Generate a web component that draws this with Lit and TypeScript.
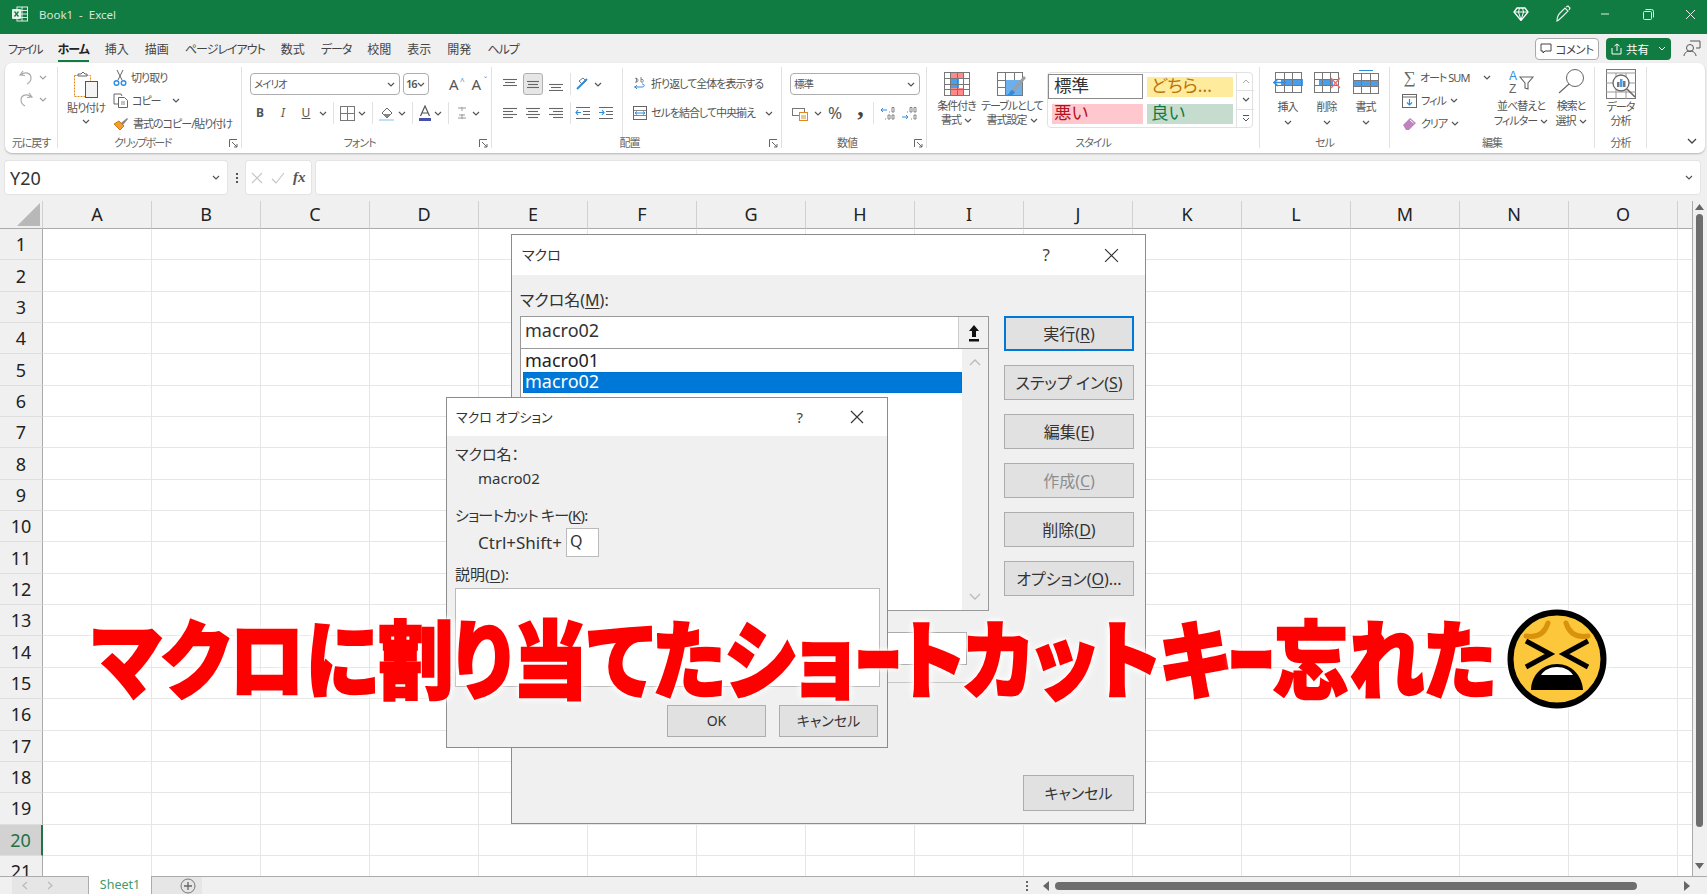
import { LitElement, html, css, svg } from "lit";
import { customElement } from "lit/decorators.js";

const FONT = css`"Noto Sans", "Noto Sans CJK JP", sans-serif`;

const chev = html`<svg class="chev" width="8" height="5" viewBox="0 0 8 5"><path d="M1 1l3 3 3-3" fill="none" stroke="#555" stroke-width="1.2"/></svg>`;
const launcher = html`<svg class="launch" width="9" height="9" viewBox="0 0 9 9"><path d="M.5 8V.5H8M3 3l5 5M8 5v3H5" fill="none" stroke="#666"/></svg>`;

const lines = (ys: number[][], col = "#666") => html`<svg class="ic" width="16" height="14" viewBox="0 0 16 14">${ys.map(
  ([y, a, b]) => svg`<path d="M${a} ${y}.5H${b}" stroke="${col}" stroke-width="1.1"/>`)}</svg>`;

const gridLines = (x: number, y: number, w: number, h: number, c: number, r: number, col = "#777") => svg`
  <rect x="${x + .5}" y="${y + .5}" width="${w}" height="${h}" fill="none" stroke="${col}"/>
  ${Array.from({ length: c - 1 }, (_, i) => svg`<path d="M${x + Math.round((w * (i + 1)) / c) + .5} ${y}v${h}" stroke="${col}"/>`)}
  ${Array.from({ length: r - 1 }, (_, i) => svg`<path d="M${x} ${y + Math.round((h * (i + 1)) / r) + .5}h${w}" stroke="${col}"/>`)}`;

@customElement("xl-ribbon")
class XlRibbon extends LitElement {
  static styles = css`
    :host { display: flex; height: 90px; margin: 0 2px 0 5px; padding-top: 4px; box-sizing: border-box; background: #fff; border-radius: 7px; box-shadow: 0 1px 2px rgba(0,0,0,.25); font-family: ${FONT}; font-size: 11px; letter-spacing: -1px; color: #555; font-feature-settings: "palt"; position: relative; line-height: 14px; white-space: nowrap; }
    .group { display: flex; flex-direction: column; height: 81px; border-right: 1px solid #e1e1e1; box-sizing: border-box; flex: none; }
    .body { height: 71px; display: flex; box-sizing: border-box; }
    .lbl { height: 10px; line-height: 10px; display: flex; justify-content: center; font-size: 11px; color: #666; position: relative; }
    .lbl.l { padding-right: 14px; }
    .lbl.n { letter-spacing: -1.6px; }
    .launch { position: absolute; right: 3px; top: 1px; }
    .ic { display: block; flex: none; }
    .chev { display: block; flex: none; }
    .w-undo { width: 53px; } .w-clip { width: 184px; } .w-font { width: 250px; } .w-align { width: 290px; }
    .w-num { width: 145px; } .w-style { width: 333px; } .w-cells { width: 130px; } .w-edit { width: 205px; } .w-ana { width: 52px; }
    .undo { flex-direction: column; gap: 6px; padding: 2px 0 0 13px; }
    .undo > div { display: flex; align-items: center; gap: 5px; opacity: .55; }
    .clip { padding-left: 6px; gap: 5px; }
    .big { display: flex; flex-direction: column; align-items: center; }
    .big .t { line-height: 14px; text-align: center; display: flex; align-items: center; gap: 3px; justify-content: center; }
    .paste { width: 44px; padding-top: 4px; }
    .paste .t { margin-top: 2px; }
    .paste .chev { margin-top: 4px; }
    .col3 { display: flex; flex-direction: column; }
    .col3 > div { height: 23px; display: flex; align-items: center; gap: 4px; }
    .col3 > div:first-child { margin-top: -1px; }
    .stack { display: flex; flex-direction: column; padding-top: 6px; gap: 7px; }
    .row { display: flex; align-items: center; height: 22px; }
    .combo { height: 22px; box-sizing: border-box; border: 1px solid #adadad; border-radius: 4px; display: flex; align-items: center; justify-content: space-between; padding: 0 4px 0 3px; font-size: 10.5px; }
    .c-font { width: 150px; } .c-size { width: 26px; margin-left: 3px; padding: 0 3px 0 2px; } .c-num { width: 130px; }
    .sz { font-family: "Noto Sans", sans-serif; font-size: 11px; font-weight: 600; }
    .fontg { padding-left: 8px; }
    .aa { font-size: 15px; margin-left: 20px; color: #555; position: relative; letter-spacing: 0; }
    .aa + .aa { margin-left: 13px; }
    .aa i { position: absolute; right: -6px; top: -3px; font-style: normal; font-size: 8px; color: #2e8ce0; }
    .bt { width: 20px; text-align: center; font-family: "Noto Sans", sans-serif; font-size: 12px; letter-spacing: 0; }
    .b { font-weight: 700; } .i { font-style: italic; } .u { text-decoration: underline; }
    .r2 { gap: 3px; }
    .sep { width: 1px; height: 22px; background: #e1e1e1; margin: 0 3px; flex: none; }
    .alg { padding-left: 10px; }
    .alrow { gap: 7px; height: 22px; display: flex; align-items: center; }
    .alrow .sep { margin: 0 -3px 0 -1px; }
    .alrow .chev { margin-left: -4px; }
    .sel { width: 20px; height: 22px; border: 1px solid #b0b0b0; border-radius: 3px; background: #e6e6e6; display: flex; align-items: center; justify-content: center; box-sizing: border-box; margin: 0 -2px; flex: none; }
    .vsep { width: 1px; height: 70px; background: #e1e1e1; margin: 1px 10px 0 8px; flex: none; align-self: flex-start; }
    .wrapc { display: flex; flex-direction: column; gap: 7px; padding-top: 6px; }
    .wrapc > div { height: 22px; display: flex; align-items: center; gap: 4px; }
    .num { padding-left: 8px; }
    .nrow { gap: 6px; padding-left: 2px; }
    .nrow .sep { margin: 0 0 0 3px; }
    .dec { margin-left: -3px; }
    .pct { font-size: 17px; font-family: "Noto Sans", sans-serif; color: #555; letter-spacing: 0; }
    .comma { font-size: 26px; font-weight: 900; margin: -10px 0 0 9px; font-family: "Liberation Serif", serif; color: #444; letter-spacing: 0; }
    .sty { padding-left: 8px; gap: 4px; }
    .sb { width: 43px; padding-top: 5px; }
    .sb2 { width: 60px; padding-top: 5px; }
    .sb .t, .sb2 .t { line-height: 14px; margin-top: 3px; }
    .sb .t + .t, .sb2 .t + .t { margin-top: 0; }
    .gal { width: 206px; height: 56px; margin: 5px 0 0 1px; border: 1px solid #e1e1e1; border-radius: 4px; box-sizing: border-box; display: flex; flex: none; }
    .cells { display: grid; grid-template-columns: 95px 93px; grid-template-rows: 27px 27px; width: 188px; flex: none; align-items: center; letter-spacing: 0; }
    .cell { font-size: 17.5px; line-height: 17px; padding-left: 5px; height: 20px; white-space: nowrap; }
    .c-n { height: 25px; border: 1px solid #8a8a8a; color: #333; line-height: 20px; box-sizing: border-box; }
    .c-m { background: #ffeb9c; color: #b8730c; margin: 0 3px 0 4px; padding-left: 4px; }
    .c-b { background: #ffc7ce; color: #b3131c; margin: 0 0 0 4px; padding-left: 2px; } .c-g { background: #c6dccf; color: #107c41; margin: 0 3px 0 4px; padding-left: 4px; }
    .gs { width: 17px; display: flex; flex-direction: column; border-left: 1px solid #e1e1e1; flex: none; }
    .gs > div { flex: 1; display: flex; align-items: center; justify-content: center; border-bottom: 1px solid #e1e1e1; }
    .gs > div:last-child { border: 0; }
    .cellg { padding: 3px 0 0 8px; }
    .cb { width: 39px; } .cb .t { margin-top: 6px; } .cb .chev { margin-top: 6px; }
    .edit { padding-left: 12px; }
    .e3 { width: 94px; display: flex; flex-direction: column; flex: none; }
    .e3 > div { height: 23px; display: flex; align-items: center; gap: 4px; }
    .e3 > div:first-child { margin-top: -1px; }
    .sum { width: 14px; font-size: 17px; color: #666; text-align: center; font-family: "Liberation Serif", serif; }
    .es { width: 50px; padding-top: 1px; flex: none; }
    .es .t { margin-top: 5px; } .es .t + .t { margin-top: 1px; }
    .ana { align-items: center; flex-direction: column; padding-top: 2px; }
    .ana .t { margin-top: 1px; text-align: center; }
    .collapse { position: absolute; right: 8px; bottom: 9px; }
  `;

  render() {
    return html`
      <div class="group w-undo">
        <div class="body undo">
          <div><svg class="ic" width="16" height="16" viewBox="0 0 16 16"><path d="M5 2L2 6l5 .5M3 6c4-4 10-2 10 3 0 3-2 5-4 6" fill="none" stroke="#666" stroke-width="1.2"/></svg>${chev}</div>
          <div><svg class="ic" width="16" height="16" viewBox="0 0 16 16"><path d="M11 2l3 4-5 .5M13 6C9 2 3 4 3 9c0 3 2 5 4 6" fill="none" stroke="#666" stroke-width="1.2"/></svg>${chev}</div>
        </div>
        <div class="lbl">元に戻す</div>
      </div>

      <div class="group w-clip">
        <div class="body clip">
          <div class="big paste">
            <svg class="ic" width="28" height="28" viewBox="0 0 28 28"><rect x="2.5" y="4.5" width="16" height="21" fill="#fff" stroke="#e08a1e" stroke-dasharray="2 1"/><path d="M6 5h9V3h-2l-2-2-2 2H6z" fill="#fff" stroke="#666"/><rect x="13.5" y="10.5" width="12" height="16" fill="#f4f4f4" stroke="#555"/></svg>
            <div class="t">貼り付け</div>${chev}
          </div>
          <div class="col3">
            <div><svg class="ic" width="14" height="16" viewBox="0 0 14 16"><path d="M4 0l5 10M10 0L5 10" stroke="#666" fill="none"/><circle cx="3.5" cy="13" r="2.3" fill="none" stroke="#2e8ce0" stroke-width="1.4"/><circle cx="10.5" cy="13" r="2.3" fill="none" stroke="#2e8ce0" stroke-width="1.4"/></svg><span>切り取り</span></div>
            <div><svg class="ic" width="15" height="15" viewBox="0 0 15 15"><path d="M5 11H1V1h7l1 2" fill="none" stroke="#666"/><path d="M5.5 4.5h6l3 3v7h-9z" fill="#fff" stroke="#666"/><path d="M8 9h4M8 11h4" stroke="#888"/></svg><span>コピー</span><span>&nbsp;&nbsp;</span>${chev}</div>
            <div><svg class="ic" width="16" height="14" viewBox="0 0 16 14"><path d="M1 7l6 6 4-4-5-5z" fill="#f0a030" stroke="#d07a10"/><path d="M8 6l6-5 1 1-5 6z" fill="#888"/></svg><span>書式のコピー/貼り付け</span></div>
          </div>
        </div>
        <div class="lbl l n">クリップボード${launcher}</div>
      </div>

      <div class="group w-font">
        <div class="body fontg">
          <div class="stack">
            <div class="row">
              <div class="combo c-font"><span>メイリオ</span>${chev}</div>
              <div class="combo c-size"><span class="sz">16</span>${chev}</div>
              <span class="aa">A<i>^</i></span><span class="aa">A<i>ˇ</i></span>
            </div>
            <div class="row r2">
              <span class="bt b">B</span><span class="bt i">I</span><span class="bt u">U</span>${chev}
              <span class="sep"></span>
              <svg class="ic" width="15" height="15" viewBox="0 0 15 15">${gridLines(0, 0, 14, 14, 2, 2)}</svg>${chev}
              <span class="sep"></span>
              <svg class="ic" width="16" height="16" viewBox="0 0 16 16"><path d="M3 8l5-5 5 5-5 5z" fill="none" stroke="#666"/><path d="M4 9h8l-4 4z" fill="#888"/><rect y="14" width="15" height="2" fill="#bfe0f5"/></svg>${chev}
              <span class="sep"></span>
              <svg class="ic" width="12" height="16" viewBox="0 0 12 16"><path d="M1.500 11L6 1l4.500 10M3 8h6" fill="none" stroke="#555" stroke-width="1.2"/><rect y="13" width="12" height="3" fill="#4650a8"/></svg>${chev}
              <span class="sep"></span>
              <svg class="ic" width="14" height="15" viewBox="0 0 14 15"><path d="M3 2h8M7 1v4M4 9h6M3 12h8M7 8v5" stroke="#999" fill="none"/></svg>${chev}
            </div>
          </div>
        </div>
        <div class="lbl l">フォント${launcher}</div>
      </div>

      <div class="group w-align">
        <div class="body alg">
          <div class="stack">
            <div class="alrow">
              ${lines([[2, 1, 15], [5, 3, 13], [8, 1, 15]])}
              <div class="sel">${lines([[4, 2, 14], [7, 3, 13], [10, 2, 14]])}</div>
              ${lines([[7, 1, 15], [10, 3, 13], [13, 1, 15]])}
              <span class="sep"></span>
              <svg class="ic" width="16" height="15" viewBox="0 0 16 15"><path d="M2 12L12 2" stroke="#2e8ce0" stroke-width="2"/><path d="M4 4l4-3 3 3-4 3z" fill="none" stroke="#777"/></svg>${chev}
            </div>
            <div class="alrow">
              ${lines([[2, 1, 15], [5, 1, 11], [8, 1, 15], [11, 1, 11]])}
              ${lines([[2, 1, 15], [5, 3, 13], [8, 1, 15], [11, 3, 13]])}
              ${lines([[2, 1, 15], [5, 5, 15], [8, 1, 15], [11, 5, 15]])}
              <span class="sep"></span>
              <svg class="ic" width="16" height="14" viewBox="0 0 16 14"><path d="M1 6.5h5M3 4L1 6.5 3 9" fill="none" stroke="#2e8ce0" stroke-width="1.2"/><path d="M1 1.5h14M8 5.5h7M8 8.5h7M1 12.5h14" stroke="#666"/></svg>
              <svg class="ic" width="16" height="14" viewBox="0 0 16 14"><path d="M1 6.5h5M4 4l2 2.5L4 9" fill="none" stroke="#2e8ce0" stroke-width="1.2"/><path d="M1 1.5h14M8 5.5h7M8 8.5h7M1 12.5h14" stroke="#666"/></svg>
            </div>
          </div>
          <div class="vsep"></div>
          <div class="wrapc">
            <div><svg class="ic" width="14" height="16" viewBox="0 0 14 16"><path d="M1 11h8c3 0 3-3 0-3M4 9l-2 2 2 2" fill="none" stroke="#2e8ce0"/><path d="M2 2.500a2 2 0 1 1 0 3.500M3.500 2v4M8 1v5M8 3.500a1.500 1.500 0 1 1 0 2.500" fill="none" stroke="#777" stroke-width=".9"/></svg><span>折り返して全体を表示する</span></div>
            <div><svg class="ic" width="14" height="14" viewBox="0 0 14 14"><rect x=".5" y=".5" width="13" height="13" fill="none" stroke="#666"/><path d="M1 4.5h12M1 9.5h12" stroke="#888"/><path d="M2 7h10M4 5.5L2 7l2 1.5M10 5.5L12 7l-2 1.5" fill="none" stroke="#2e8ce0"/></svg><span>セルを結合して中央揃え</span><span>&nbsp;</span>${chev}</div>
          </div>
        </div>
        <div class="lbl l">配置${launcher}</div>
      </div>

      <div class="group w-num">
        <div class="body num">
          <div class="stack">
            <div class="combo c-num"><span>標準</span>${chev}</div>
            <div class="row nrow">
              <svg class="ic" width="16" height="15" viewBox="0 0 16 15"><rect x=".5" y="2.5" width="12" height="7" fill="none" stroke="#777"/><rect x="7.5" y="6.5" width="8" height="8" fill="#fff" stroke="#e08a1e"/><path d="M9 10h5M9 12h5" stroke="#e08a1e"/></svg>${chev}
              <span class="pct">%</span><span class="comma">,</span>
              <span class="sep"></span>
              <svg class="ic" width="18" height="15" viewBox="0 0 18 15"><path d="M1 4h6M3 2L1 4l2 2" fill="none" stroke="#2e8ce0"/><path d="M9 6h1M12 1.500h2v4.500h-2zM5 13h1M8 9h2v4H8zM12 9h2v4h-2z" fill="none" stroke="#777" stroke-width=".9"/></svg>
              <svg class="ic dec" width="18" height="15" viewBox="0 0 18 15"><path d="M1 11h6M5 9l2 2-2 2" fill="none" stroke="#2e8ce0"/><path d="M6 6h1M9 1.500h2v4.500H9zM13 1.500h2v4.500h-2zM10 13h1M13 9h2v4h-2z" fill="none" stroke="#777" stroke-width=".9"/></svg>
            </div>
          </div>
        </div>
        <div class="lbl l">数値${launcher}</div>
      </div>

      <div class="group w-style">
        <div class="body sty">
          <div class="big sb">
            <svg class="ic" width="26" height="24" viewBox="0 0 26 24"><rect x="6" y="0" width="14" height="7" fill="#ff8a8a"/><rect x="6" y="7" width="9" height="9" fill="#4a9fe8"/><rect x="6" y="16" width="14" height="8" fill="#ff8a8a"/>${gridLines(0, 0, 25, 23, 4, 4)}</svg>
            <div class="t">条件付き</div>
            <div class="t">書式 ${chev}</div>
          </div>
          <div class="big sb2">
            <svg class="ic" width="30" height="24" viewBox="0 0 30 24">${gridLines(0, 0, 25, 23, 3, 3)}<rect x="9" y="8" width="16" height="15" fill="#6ab0ec"/><path d="M27 4l2 2-12 14-3-2z" fill="#9aa0a6"/><path d="M15 18c-3 1-2 5-6 5 5 1 8 0 9-3z" fill="#2e8ce0"/></svg>
            <div class="t">テーブルとして</div>
            <div class="t">書式設定 ${chev}</div>
          </div>
          <div class="gal">
            <div class="cells">
              <div class="cell c-n">標準</div><div class="cell c-m">どちら...</div>
              <div class="cell c-b">悪い</div><div class="cell c-g">良い</div>
            </div>
            <div class="gs">
              <div><svg width="8" height="5" viewBox="0 0 8 5"><path d="M1 4l3-3 3 3" fill="none" stroke="#aaa"/></svg></div>
              <div>${chev}</div>
              <div><svg width="8" height="7" viewBox="0 0 8 7"><path d="M1 .5h6M1 3l3 3 3-3" fill="none" stroke="#555"/></svg></div>
            </div>
          </div>
        </div>
        <div class="lbl">スタイル</div>
      </div>

      <div class="group w-cells">
        <div class="body cellg">
          <div class="big cb">
            <svg class="ic" width="30" height="24" viewBox="0 0 30 24"><rect x="8" y="9" width="22" height="7" fill="#4a9fe8"/>${gridLines(2, 2, 26, 20, 3, 3)}<path d="M13 12.5H1M5 9l-4 3.5L5 16" fill="none" stroke="#2e8ce0" stroke-width="1.6"/></svg>
            <div class="t">挿入</div>${chev}
          </div>
          <div class="big cb">
            <svg class="ic" width="28" height="24" viewBox="0 0 28 24"><rect x="6" y="9" width="14" height="7" fill="#4a9fe8"/>${gridLines(1, 2, 24, 20, 3, 3)}<path d="M18 8l9 10M27 8l-9 10" stroke="#f26d6d" stroke-width="1.4"/></svg>
            <div class="t">削除</div>${chev}
          </div>
          <div class="big cb">
            <svg class="ic" width="26" height="24" viewBox="0 0 26 24"><path d="M6 .5h14" stroke="#2e8ce0"/><rect x="1" y="10" width="24" height="7" fill="#4a9fe8"/>${gridLines(0, 3, 25, 20, 3, 3)}</svg>
            <div class="t">書式</div>${chev}
          </div>
        </div>
        <div class="lbl">セル</div>
      </div>

      <div class="group w-edit">
        <div class="body edit">
          <div class="e3">
            <div><span class="sum">∑</span><span>オート SUM</span><span>&nbsp;&nbsp;&nbsp;</span>${chev}</div>
            <div><svg class="ic" width="15" height="14" viewBox="0 0 15 14"><rect x=".5" y=".5" width="14" height="13" fill="none" stroke="#666"/><path d="M1 3h13" stroke="#666"/><path d="M7.5 5v6M5 8.5l2.5 2.5L10 8.5" fill="none" stroke="#2e8ce0" stroke-width="1.2"/></svg><span>フィル</span>${chev}</div>
            <div><svg class="ic" width="15" height="14" viewBox="0 0 15 14"><path d="M1 8l7-7 6 5-7 7H4z" fill="#c183bd"/><path d="M8 3l3.5 3" stroke="#fff"/></svg><span>クリア</span>${chev}</div>
          </div>
          <div class="big es">
            <svg class="ic" width="28" height="26" viewBox="0 0 28 26"><text x="2" y="12" font-size="12" fill="#2e8ce0" font-family="Liberation Sans">A</text><text x="2" y="25" font-size="12" fill="#666" font-family="Liberation Sans">Z</text><path d="M13 9h13l-5 6v6l-3-1v-5z" fill="none" stroke="#666" stroke-width="1.1"/></svg>
            <div class="t">並べ替えと</div>
            <div class="t">フィルター ${chev}</div>
          </div>
          <div class="big es">
            <svg class="ic" width="28" height="26" viewBox="0 0 28 26"><circle cx="18" cy="10" r="8.5" fill="none" stroke="#666"/><path d="M12 16L2 25" stroke="#666" stroke-width="1.1"/></svg>
            <div class="t">検索と</div>
            <div class="t">選択 ${chev}</div>
          </div>
        </div>
        <div class="lbl">編集</div>
      </div>

      <div class="group w-ana">
        <div class="body ana">
          <svg class="ic" width="30" height="30" viewBox="0 0 30 30"><rect x=".5" y=".5" width="29" height="29" fill="none" stroke="#777"/><path d="M0 4h30M0 14h30M0 23h30M10 4v26M20 4v26" stroke="#999"/><circle cx="15" cy="14" r="8" fill="#fff" stroke="#666" stroke-width="1.3"/><rect x="11" y="13" width="2.5" height="5" fill="#777"/><rect x="14" y="10" width="2.5" height="8" fill="#4a9fe8"/><rect x="17" y="12" width="2.5" height="6" fill="#777"/><path d="M21 20l8 8" stroke="#666" stroke-width="1.6"/></svg>
          <div class="t">データ<br />分析</div>
        </div>
        <div class="lbl">分析</div>
      </div>

      <svg class="collapse" width="10" height="6" viewBox="0 0 10 6"><path d="M1 1l4 4 4-4" fill="none" stroke="#444" stroke-width="1.3"/></svg>
    `;
  }
}

@customElement("xl-sheet")
class XlSheet extends LitElement {
  static styles = css`
    :host { display: flex; flex-direction: column; flex: 1; min-height: 0; font-family: "Noto Sans", sans-serif; }
    .main { flex: 1; min-height: 0; display: flex; overflow: hidden; }
    .grid { width: 1693px; flex: none; display: grid; grid-template-columns: 43px repeat(15, 109px) 15px; grid-auto-rows: 31.35px; grid-template-rows: 28px; background: #fff; overflow: hidden; border-right: 1px solid #ababab; box-sizing: border-box; }
    .hc { background: #f0f0f0; border-right: 1px solid #d0d0d0; border-bottom: 1px solid #ababab; box-sizing: border-box; display: flex; align-items: center; justify-content: center; font-size: 18px; color: #222; padding-bottom: 2px; }
    .corner { align-items: flex-end; justify-content: flex-end; padding: 0 2px 2px 0; }
    .rh { background: #f0f0f0; border-right: 1px solid #ababab; border-bottom: 1px solid #dedede; box-sizing: border-box; display: flex; align-items: center; justify-content: center; font-size: 18px; color: #222; }
    .rh.on { background: #d2d2d2; color: #217346; border-right: 2px solid #217346; }
    .c { border-right: 1px solid #e6e6e6; border-bottom: 1px solid #e6e6e6; box-sizing: border-box; }
    .vs { width: 13px; flex: none; background: #f0f0f0; display: flex; flex-direction: column; align-items: center; padding-top: 3px; box-sizing: border-box; }
    .vth { width: 7px; flex: 1; margin: 4px 0 0; background: #6e6e6e; border-radius: 4px; max-height: 613px; }
    .vsp { flex: 1; max-height: 36px; }
    .bar { height: 18px; flex: none; display: flex; align-items: center; background: #f0f0f0; border-top: 1px solid #ababab; box-sizing: border-box; font-size: 12.5px; }
    .nav { width: 76px; margin-left: 12px; height: 100%; background: #e6e6e6; display: flex; gap: 19px; align-items: center; padding-left: 10px; box-sizing: border-box; flex: none; }
    .tab { width: 64px; flex: none; background: #fff; color: #3f9a6c; text-align: center; line-height: 17px; margin-top: -1px; height: 18px; border-right: 1px solid #ababab; border-left: 1px solid #ababab; box-sizing: border-box; }
    .plus { width: 50px; height: 100%; background: #e6e6e6; display: flex; align-items: center; padding-left: 28px; box-sizing: border-box; flex: none; }
    .sp { flex: 1; }
    .dots { margin-right: 15px; display: flex; flex-direction: column; gap: 2px; }
    .dots i { width: 2px; height: 2px; background: #666; display: block; }
    .hth { width: 582px; height: 8px; border-radius: 4px; background: #6e6e6e; margin: 0 47px 0 5px; flex: none; }
    .ar { flex: none; }
    .barend { width: 16px; flex: none; }
  `;
  render() {
    const cols = "ABCDEFGHIJKLMNO".split("");
    const rows = Array.from({ length: 21 }, (_, i) => i + 1);
    return html`
      <div class="main">
        <div class="grid">
          <div class="hc corner"><svg width="23" height="23" viewBox="0 0 23 23"><path d="M23 0v23H0z" fill="#b8b8b8"/></svg></div>
          ${cols.map(c => html`<div class="hc">${c}</div>`)}
          <div class="hc"></div>
          ${rows.map(r => html`
            <div class="rh ${r === 20 ? "on" : ""}">${r}</div>
            ${cols.map(() => html`<div class="c"></div>`)}
            <div class="c"></div>
          `)}
        </div>
        <div class="vs">
          <svg width="9" height="6" viewBox="0 0 9 6"><path d="M4.500 0L9 6H0z" fill="#666"/></svg>
          <div class="vth"></div>
          <div class="vsp"></div>
          <svg width="9" height="6" viewBox="0 0 9 6"><path d="M0 0h9L4.500 6z" fill="#666"/></svg>
        </div>
      </div>
      <div class="bar">
        <div class="nav">
          <svg width="6" height="9" viewBox="0 0 6 9"><path d="M5 1L1 4.500 5 8" fill="none" stroke="#bbb" stroke-width="1.3"/></svg>
          <svg width="6" height="9" viewBox="0 0 6 9"><path d="M1 1l4 3.500L1 8" fill="none" stroke="#bbb" stroke-width="1.3"/></svg>
        </div>
        <div class="tab">Sheet1</div>
        <div class="plus"><svg width="16" height="16" viewBox="0 0 16 16"><circle cx="8" cy="8" r="7" fill="none" stroke="#777"/><path d="M4 8h8M8 4v8" stroke="#666" stroke-width="1.3"/></svg></div>
        <div class="sp"></div>
        <div class="dots"><i></i><i></i><i></i></div>
        <svg class="ar" width="7" height="10" viewBox="0 0 7 10"><path d="M6 0v10L0 5z" fill="#666"/></svg>
        <div class="hth"></div>
        <svg class="ar" width="7" height="10" viewBox="0 0 7 10"><path d="M0 0v10l6-5z" fill="#666"/></svg>
        <div class="barend"></div>
      </div>
    `;
  }
}

const dialogBase = css`
  :host { position: absolute; display: flex; flex-direction: column; box-sizing: border-box; background: #f0f0f0; border: 1px solid #8c8c8c; font-family: ${FONT}; color: #333; font-feature-settings: "palt"; line-height: 20px; white-space: nowrap; }
  .title { background: #fff; display: flex; align-items: center; flex: none; }
  .title span:first-child { flex: 1; }
  .q { font-size: 17px; color: #444; }
  .btn { box-sizing: border-box; border: 1px solid #adadad; background: #e1e1e1; display: flex; align-items: center; justify-content: center; color: #333; }
  u { text-underline-offset: 2px; }
`;
const closeX = (s: number) => html`<svg width="${s}" height="${s}" viewBox="0 0 14 14"><path d="M1 1l12 12M13 1L1 13" stroke="#333" stroke-width="1.1"/></svg>`;

@customElement("xl-macro-dialog")
class XlMacroDialog extends LitElement {
  static styles = [dialogBase, css`
    :host { left: 511px; top: 234px; width: 635px; height: 590px; font-size: 16px; }
    .title { height: 40px; padding: 0 26px 0 10px; font-size: 14px; gap: 54px; }
    .body { flex: 1; display: grid; grid-template-columns: 469px 130px; column-gap: 15px; padding: 15px 11px 12px 8px; }
    .left { display: flex; flex-direction: column; }
    .lab { height: 20px; margin-bottom: 6px; }
    .inp { height: 33px; box-sizing: border-box; background: #fff; border: 1px solid #999; display: flex; align-items: center; font-size: 18px; padding-left: 4px; font-feature-settings: normal; }
    .inp span { flex: 1; padding-bottom: 5px; }
    .up { width: 29px; height: 31px; background: #f0f0f0; display: flex; align-items: center; justify-content: center; border-left: 1px solid #ccc; }
    .list { height: 262px; flex: none; box-sizing: border-box; background: #fff; border: 1px solid #999; border-top: 0; display: flex; font-size: 18px; font-feature-settings: normal; }
    .items { flex: 1; padding: 2px 0 0 2px; }
    .it { height: 21px; line-height: 19px; padding-left: 2px; color: #222; }
    .it.on { background: #0078d7; color: #fff; border: 1px dotted #06c; box-sizing: border-box; line-height: 17px; padding-left: 1px; }
    .ls { width: 26px; background: #f0f0f0; display: flex; flex-direction: column; justify-content: space-between; align-items: center; padding: 10px 0; box-sizing: border-box; flex: none; }
    .combo { margin-top: 21px; width: 447px; height: 33px; border: 1px solid #aaa; background: #fff; box-sizing: border-box; }
    .hr { margin-top: 17px; border-top: 1px solid #c6c6c6; width: 100%; }
    .right { display: flex; flex-direction: column; gap: 14px; padding-top: 26px; }
    .right .btn { height: 35px; }
    .def { border: 2px solid #0078d7; }
    .dis { color: #8d8d8d; }
    .cancel { margin-top: auto; height: 36px !important; width: 111px; align-self: flex-end; font-size: 15px; }
  `];
  render() {
    return html`
      <div class="title"><span>マクロ</span><span class="q">?</span>${closeX(15)}</div>
      <div class="body">
        <div class="left">
          <div class="lab">マクロ名(<u>M</u>):</div>
          <div class="inp"><span>macro02</span><div class="up"><svg width="14" height="18" viewBox="0 0 14 18"><path d="M7 1L2 7h3v6h4V7h3zM2 15h10v2.500H2z" fill="#111"/></svg></div></div>
          <div class="list">
            <div class="items"><div class="it">macro01</div><div class="it on">macro02</div></div>
            <div class="ls">
              <svg width="12" height="7" viewBox="0 0 12 7"><path d="M1 6l5-5 5 5" fill="none" stroke="#bbb" stroke-width="1.4"/></svg>
              <svg width="12" height="7" viewBox="0 0 12 7"><path d="M1 1l5 5 5-5" fill="none" stroke="#bbb" stroke-width="1.4"/></svg>
            </div>
          </div>
          <div class="combo"></div>
          <div class="hr"></div>
        </div>
        <div class="right">
          <div class="btn def">実行(<u>R</u>)</div>
          <div class="btn">ステップ イン(<u>S</u>)</div>
          <div class="btn">編集(<u>E</u>)</div>
          <div class="btn dis">作成(<u>C</u>)</div>
          <div class="btn">削除(<u>D</u>)</div>
          <div class="btn">オプション(<u>O</u>)...</div>
          <div class="btn cancel">キャンセル</div>
        </div>
      </div>
    `;
  }
}

@customElement("xl-options-dialog")
class XlOptionsDialog extends LitElement {
  static styles = [dialogBase, css`
    :host { left: 446px; top: 397px; width: 442px; height: 351px; font-size: 15px; }
    .title { height: 38px; padding: 0 23px 0 9px; font-size: 13px; gap: 47px; }
    .q { font-size: 15px; }
    .body { flex: 1; display: flex; flex-direction: column; padding: 8px 7px 10px 8px; }
    .indent { padding-left: 23px; }
    .t1 { margin-top: 4px; }
    .sp1 { margin-top: 17px; letter-spacing: -.8px; }
    .keyrow { display: flex; align-items: center; gap: 4px; margin-top: 3px; height: 29px; }
    .keyrow span { font-size: 17px; }
    .key { width: 33px; height: 29px; background: #fff; border: 1px solid #bbb; box-sizing: border-box; padding-left: 3px; line-height: 24px; font-size: 16px; }
    .ds { margin-top: 7px; }
    .ta { height: 99px; margin-top: 4px; background: #fff; border: 1px solid #bbb; box-sizing: border-box; flex: none; }
    .btns { display: flex; justify-content: flex-end; gap: 13px; margin-top: 18px; margin-right: 2px; }
    .btn { width: 99px; height: 32px; font-size: 14px; }
  `];
  render() {
    return html`
      <div class="title"><span>マクロ オプション</span><span class="q">?</span>${closeX(14)}</div>
      <div class="body">
        <div>マクロ名：</div>
        <div class="indent t1">macro02</div>
        <div class="sp1">ショートカット キー(<u>K</u>):</div>
        <div class="indent keyrow"><span>Ctrl+Shift+</span><div class="key">Q</div></div>
        <div class="ds">説明(<u>D</u>):</div>
        <div class="ta"></div>
        <div class="btns"><div class="btn">OK</div><div class="btn">キャンセル</div></div>
      </div>
    `;
  }
}

@customElement("app-root")
class AppRoot extends LitElement {
  static styles = css`
    :host { display: flex; flex-direction: column; position: relative; width: 1707px; height: 894px; overflow: hidden; background: #f0f0f0; font-family: ${FONT}; font-feature-settings: "palt"; }
    .tb { height: 34px; flex: none; background: #107c41; display: flex; align-items: center; color: #d6e8dd; font-size: 11.5px; padding: 0 0 6px 12px; box-sizing: border-box; }
    .doc { margin-left: 11px; flex: 1; }
    .ctl { display: flex; align-items: center; margin-right: -5px; }
    .ctl > span { width: 42.500px; display: flex; justify-content: center; }
    .tabs { height: 29px; flex: none; display: flex; align-items: center; padding-left: 8px; font-size: 12px; color: #444; }
    .tabs > .m { margin-right: 16px; }
    .k1 { letter-spacing: -1px; } .k2 { letter-spacing: -2px; }
    .tabs .on { font-weight: 700; color: #222; position: relative; }
    .on::after { content: ""; position: absolute; left: 0; right: 0; bottom: -4px; height: 2px; background: #107c41; }
    .sp { flex: 1; }
    .cm { height: 22px; width: 64px; border: 1px solid #aaa; border-radius: 4px; background: #fff; box-sizing: border-box; display: flex; align-items: center; justify-content: center; gap: 3px; font-size: 11.5px; letter-spacing: -.5px; }
    .sh { height: 22px; width: 65px; margin-left: 7px; border-radius: 4px; background: #107c41; color: #fff; display: flex; align-items: center; justify-content: center; gap: 3px; font-size: 11.5px; }
    .pr { margin: 0 6px 0 12px; display: block; }
    .fb { flex: none; height: 33px; margin: 8px 7px 7px 5px; display: flex; align-items: stretch; }
    .box { background: #fff; border-radius: 3px; box-shadow: 0 0 0 1px #e4e4e4; display: flex; align-items: center; }
    .nm { width: 222px; justify-content: space-between; padding: 0 7px 0 5px; box-sizing: border-box; font-family: "Noto Sans", sans-serif; font-size: 18px; color: #333; }
    .vd { width: 19px; display: flex; flex-direction: column; gap: 2px; align-items: center; justify-content: center; }
    .vd i { width: 2px; height: 2px; background: #555; display: block; }
    .fx { width: 65px; gap: 8px; padding-left: 5px; box-sizing: border-box; }
    .fxt { font-family: "Liberation Serif", serif; font-style: italic; font-size: 15px; color: #555; font-weight: 700; }
    .fi { flex: 1; margin-left: 5px; justify-content: flex-end; padding-right: 7px; }
    .banner { position: absolute; left: 92px; top: 609px; display: flex; align-items: center; height: 100px; width: 1515px; justify-content: space-between; }
    .bwrap { width: 1400px; flex: none; margin-top: -9px; }
    .btxt { display: inline-block; transform: scaleX(.884); transform-origin: left center; font-family: "Noto Sans CJK JP", sans-serif; font-weight: 900; font-size: 85px; color: #f00; line-height: 100px; -webkit-text-stroke: 2.5px #f00; font-feature-settings: "palt"; white-space: nowrap; text-shadow: 0 0 6px #fff, 0 0 6px #fff, 0 0 10px #fff, 0 0 10px #fff; }
    .dash { display: inline-block; width: 51px; transform: scaleX(.62); transform-origin: left center; }
    .emoji { display: block; flex: none; filter: drop-shadow(0 0 4px #fff); }
  `;

  render() {
    return html`
      <div class="tb">
        <svg width="16" height="16" viewBox="0 0 16 16"><rect x="5" y="1" width="10.500" height="14" fill="none" stroke="#dfeee5"/><path d="M5 4.500h10M5 8h10M5 11.500h10M10 1v14" stroke="#dfeee5"/><rect x="0" y="3" width="9" height="10" rx="1" fill="#e8f3ec"/><path d="M2.500 5.500l4 5M6.500 5.500l-4 5" stroke="#107c41" stroke-width="1.300"/></svg>
        <span class="doc">Book1&nbsp; -&nbsp; Excel</span>
        <div class="ctl">
          <span><svg width="16" height="14" viewBox="0 0 16 14"><path d="M4 1h8l3 4-7 8.500L1 5z" fill="none" stroke="#fff" stroke-width="1.300"/><path d="M1 5h14M5.500 5L8 13l2.500-8M5.500 5L6.500 1M10.500 5L9.500 1" stroke="#fff" fill="none"/></svg></span>
          <span><svg width="16" height="18" viewBox="0 0 16 18"><path d="M2 16c0-3 1-6 3-8l5-5 3 3-5 5c-2 2-4 4-6 5zM11 2l2-1 2 2-1 2" fill="none" stroke="#e4f0e9" stroke-width="1.200"/></svg></span>
          <span><svg width="11" height="2" viewBox="0 0 11 2"><path d="M1 1h8" stroke="#e4f0e9"/></svg></span>
          <span><svg width="11" height="11" viewBox="0 0 11 11"><rect x=".5" y="2.500" width="8" height="8" rx="1" fill="none" stroke="#e4f0e9"/><path d="M2.500 .5h6a2 2 0 0 1 2 2v6" fill="none" stroke="#e4f0e9"/></svg></span>
          <span><svg width="11" height="11" viewBox="0 0 11 11"><path d="M1 1l9 9M10 1l-9 9" stroke="#e4f0e9"/></svg></span>
        </div>
      </div>

      <div class="tabs">
        <span class="m k2">ファイル</span><span class="m k1 on">ホーム</span><span class="m">挿入</span><span class="m">描画</span>
        <span class="m k1">ページレイアウト</span><span class="m">数式</span><span class="m k1">データ</span><span class="m">校閲</span>
        <span class="m">表示</span><span class="m">開発</span><span class="m k1">ヘルプ</span>
        <span class="sp"></span>
        <div class="cm"><svg width="12" height="11" viewBox="0 0 12 11"><path d="M1 1h10v7H5l-2 2V8H1z" fill="none" stroke="#444"/></svg>コメント</div>
        <div class="sh"><svg width="12" height="12" viewBox="0 0 12 12"><path d="M1 5v6h9V5M6 8V1M3.500 3L6 1l2.500 2" fill="none" stroke="#fff"/></svg>共有<svg width="14" height="5" viewBox="0 0 14 5"><path d="M7 1l3 3 3-3" fill="none" stroke="#fff"/></svg></div>
        <svg class="pr" width="18" height="18" viewBox="0 0 18 18"><circle cx="7" cy="8" r="3.500" fill="none" stroke="#555"/><path d="M1 16c0-3 3-5 6-5s6 2 6 5M7 1h10v7h-4" fill="none" stroke="#555"/></svg>
      </div>

      <xl-ribbon></xl-ribbon>

      <div class="fb">
        <div class="box nm"><span>Y20</span>${chev}</div>
        <div class="vd"><i></i><i></i><i></i></div>
        <div class="box fx">
          <svg width="12" height="12" viewBox="0 0 12 12"><path d="M1 1l10 10M11 1L1 11" stroke="#c4c4c4" stroke-width="1.100"/></svg>
          <svg width="14" height="12" viewBox="0 0 14 12"><path d="M1 7l4 4 8-10" fill="none" stroke="#c4c4c4" stroke-width="1.100"/></svg>
          <span class="fxt">fx</span>
        </div>
        <div class="box fi">${chev}</div>
      </div>

      <xl-sheet></xl-sheet>

      <xl-macro-dialog></xl-macro-dialog>
      <xl-options-dialog></xl-options-dialog>

      <div class="banner">
        <div class="bwrap"><span class="btxt">マクロに割り当てたショ<span class="dash">ー</span>トカットキ<span class="dash">ー</span>忘れた</span></div>
        <svg class="emoji" width="100" height="100" viewBox="0 0 100 100">
          <circle cx="50" cy="50" r="46.500" fill="#fcc73a" stroke="#000" stroke-width="6"/>
          <path d="M19 27Q36 30 41 14M81 27Q64 30 59 14" fill="none" stroke="#d8920c" stroke-width="5" stroke-linecap="round"/>
          <path d="M19 32l24 13-24 13M81 32L57 45l24 13" fill="none" stroke="#000" stroke-width="5"/>
          <path d="M24 81c0-14 11-26 26-26s25 12 26 26z" fill="#000"/>
          <path d="M34 66c3-5 9-8 16-8s13 3 16 8z" fill="#fff"/>
        </svg>
      </div>
    `;
  }
}
